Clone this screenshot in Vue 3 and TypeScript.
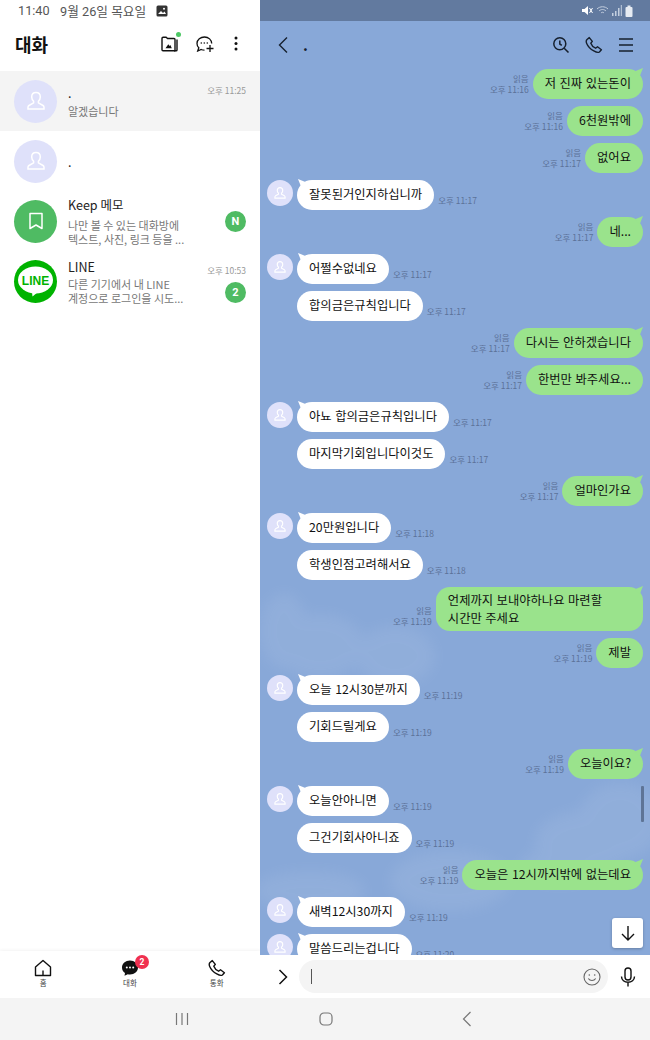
<script setup lang="ts">
interface Msg { t: string; me?: boolean; time: string; first?: boolean; multi?: boolean }
const msgs: Msg[] = [
  { t: '저 진짜 있는돈이', me: true, time: '오후 11:16', first: true },
  { t: '6천원밖에', me: true, time: '오후 11:16' },
  { t: '없어요', me: true, time: '오후 11:17' },
  { t: '잘못된거인지하십니까', time: '오후 11:17', first: true },
  { t: '네...', me: true, time: '오후 11:17', first: true },
  { t: '어쩔수없네요', time: '오후 11:17', first: true },
  { t: '합의금은규칙입니다', time: '오후 11:17' },
  { t: '다시는 안하겠습니다', me: true, time: '오후 11:17', first: true },
  { t: '한번만 봐주세요...', me: true, time: '오후 11:17' },
  { t: '아뇨 합의금은규칙입니다', time: '오후 11:17', first: true },
  { t: '마지막기회입니다이것도', time: '오후 11:17' },
  { t: '얼마인가요', me: true, time: '오후 11:17', first: true },
  { t: '20만원입니다', time: '오후 11:18', first: true },
  { t: '학생인점고려해서요', time: '오후 11:18' },
  { t: '언제까지 보내야하나요 마련할\n시간만 주세요', me: true, time: '오후 11:19', first: true, multi: true },
  { t: '제발', me: true, time: '오후 11:19' },
  { t: '오늘 12시30분까지', time: '오후 11:19', first: true },
  { t: '기회드릴게요', time: '오후 11:19' },
  { t: '오늘이요?', me: true, time: '오후 11:19', first: true },
  { t: '오늘안아니면', time: '오후 11:19', first: true },
  { t: '그건기회사아니죠', time: '오후 11:19' },
  { t: '오늘은 12시까지밖에 없는데요', me: true, time: '오후 11:19', first: true },
  { t: '새벽12시30까지', time: '오후 11:19', first: true },
  { t: '말씀드리는겁니다', time: '오후 11:20', first: true },
]
</script>

<template>
  <div class="screen">
    <div class="panes">
      <aside class="left">
        <div class="status">
          <span>11:40</span><span class="date">9월 26일 목요일</span>
          <svg class="st-img" width="12" height="12" viewBox="0 0 12 12"><rect x="0.5" y="0.5" width="11" height="11" rx="1.5" fill="#333"/><path d="M2 9l3-3 2 2 1.5-1.5L10 9z" fill="#fff"/><circle cx="8" cy="3.8" r="1" fill="#fff"/></svg>
        </div>
        <header class="lhead">
          <h1>대화</h1>
          <div class="lhead-icons">
            <span class="ic-wrap">
              <svg width="17" height="16" viewBox="0 0 17 16" fill="none" stroke="#111" stroke-width="1.400"><path d="M1 2.500c0-.8.500-1.300 1.200-1.300h3l1.300 1.300h6.500c.6 0 1 .4 1 1v11.300H2c-.6 0-1-.4-1-1z" stroke-linejoin="round"/><path d="M16 3.500v10.500c0 .5-.4.800-.9.800H13" /><path d="M4.500 12.300l2.800-4 1.300 1.700.8-.9 1.400 3.200z" fill="#111" stroke="none"/></svg>
              <i class="dot"></i>
            </span>
            <svg width="18" height="16" viewBox="0 0 18 16" fill="none" stroke="#111" stroke-width="1.300"><path d="M15.700 7.500C15.700 3.800 12.500 1 8.500 1S1 3.800 1 7.500c0 1.800.7 3.200 1.800 4.300L1.700 15l3.500-1.500c1 .4 2 .6 3.300.6"/><path d="M10.500 12.500h7M14 9v7"/><circle cx="5.300" cy="7" r=".8" fill="#111" stroke="none"/><circle cx="8.300" cy="7" r=".8" fill="#111" stroke="none"/><circle cx="11.300" cy="7" r=".8" fill="#111" stroke="none"/></svg>
            <svg class="kebab" width="4" height="15" viewBox="0 0 4 15" fill="#111"><circle cx="2" cy="2" r="1.500"/><circle cx="2" cy="7.500" r="1.500"/><circle cx="2" cy="13" r="1.500"/></svg>
          </div>
        </header>
        <ul class="rows">
          <li class="row active">
            <div class="ava">
              <svg width="22" height="22" viewBox="0 0 22 22" fill="none" stroke="#fff" stroke-width="1.500"><path d="M11 2.500c-2.800 0-4.300 2-4.300 4.500 0 1.800.8 3.200 1.900 4.300v1.500L4 15.500c-.8.500-1 1-1 1.800v1.700h16v-1.700c0-.8-.2-1.300-1-1.800l-4.600-2.700v-1.500c1.100-1.100 1.900-2.500 1.900-4.300 0-2.500-1.500-4.500-4.300-4.500z"/></svg>
            </div>
            <div class="rbody"><div class="rname">.</div><div class="rtext">알겠습니다</div></div>
            <div class="rside"><span class="rtime">오후 11:25</span></div>
          </li>
          <li class="row">
            <div class="ava">
              <svg width="22" height="22" viewBox="0 0 22 22" fill="none" stroke="#fff" stroke-width="1.500"><path d="M11 2.500c-2.800 0-4.300 2-4.300 4.500 0 1.800.8 3.200 1.900 4.300v1.500L4 15.500c-.8.500-1 1-1 1.800v1.700h16v-1.700c0-.8-.2-1.300-1-1.800l-4.600-2.700v-1.500c1.100-1.100 1.900-2.500 1.900-4.300 0-2.500-1.500-4.500-4.300-4.500z"/></svg>
            </div>
            <div class="rbody"><div class="rname">.</div></div>
          </li>
          <li class="row keep-row">
            <div class="ava keep">
              <svg width="16" height="18" viewBox="0 0 16 18" fill="none" stroke="#fff" stroke-width="1.500"><path d="M2 1.500h12v15l-6-3.500-6 3.500z" stroke-linejoin="round"/></svg>
            </div>
            <div class="rbody"><div class="rname">Keep 메모</div><div class="rtext">나만 볼 수 있는 대화방에<br>텍스트, 사진, 링크 등을 ...</div></div>
            <div class="rside center"><span class="badge">N</span></div>
          </li>
          <li class="row line-row">
            <div class="ava line">
              <svg width="43" height="43" viewBox="0 0 43 43"><ellipse cx="21.500" cy="20" rx="17.500" ry="13.500" fill="#fff"/><path d="M18 32l6 0-5.500 4.500z" fill="#fff"/><text x="21.500" y="24.500" text-anchor="middle" class="line-text">LINE</text></svg>
            </div>
            <div class="rbody"><div class="rname">LINE</div><div class="rtext">다른 기기에서 내 LINE<br>계정으로 로그인을 시도...</div></div>
            <div class="rside"><span class="rtime">오후 10:53</span><span class="badge mt">2</span></div>
          </li>
        </ul>
        <nav class="tabs">
          <div class="tab">
            <svg width="18" height="18" viewBox="0 0 18 18" fill="none" stroke="#111" stroke-width="1.400"><path d="M1.500 8L9 1.500 16.500 8v8.500h-15zM9 11.500v5" stroke-linejoin="round"/></svg>
            <span>홈</span>
          </div>
          <div class="tab">
            <span class="tab-ic">
              <svg width="18" height="18" viewBox="0 0 18 18"><path d="M9 1.500c-4.500 0-8 3-8 7 0 2.400 1.200 4.300 3 5.500l-.5 2.800 3.300-1.500c.7.100 1.400.2 2.200.2 4.400 0 8-3 8-7s-3.600-7-8-7z" fill="#111"/><circle cx="5.800" cy="8.500" r="1" fill="#fff"/><circle cx="9" cy="8.500" r="1" fill="#fff"/><circle cx="12.200" cy="8.500" r="1" fill="#fff"/></svg>
              <b class="tab-badge">2</b>
            </span>
            <span>대화</span>
          </div>
          <div class="tab">
            <svg width="18" height="18" viewBox="0 0 18 18" fill="none" stroke="#111" stroke-width="1.400"><path d="M2 3.500L4.300 1.600l3 3.800-1.500 1.900c.8 2.200 2.600 4 4.800 4.900l1.900-1.500 3.900 3-2 2.300c-1.200.8-3.200.3-5.600-1.100C5.500 13.100 3 10.500 1.700 7.400 1 5.800 1 4.500 2 3.500z" stroke-linejoin="round"/></svg>
            <span>통화</span>
          </div>
        </nav>
      </aside>

      <main class="right">
        <div class="rstatus">
          <svg width="11" height="11" viewBox="0 0 11 11" fill="#fff"><path d="M0 4h2.500L6 1v9L2.500 7H0z"/><path d="M7.500 3l3 5M10.500 3l-3 5" stroke="#fff" stroke-width="1"/></svg>
          <svg width="13" height="11" viewBox="0 0 13 11" fill="none" stroke="#c4cfdf" stroke-width="1"><path d="M1 4c3-3 8-3 11 0M3 6c2-2 5-2 7 0M5 8c1-1 2-1 3 0"/></svg>
          <svg width="10" height="11" viewBox="0 0 10 11" fill="#c4cfdf"><rect x="0" y="8" width="1.500" height="3"/><rect x="3" y="6" width="1.500" height="5"/><rect x="6" y="3" width="1.500" height="8"/><rect x="8.800" y="0" width="1" height="11"/></svg>
          <svg width="8" height="12" viewBox="0 0 8 12" fill="#e6ebf2"><rect x="0.500" y="2" width="7" height="10" rx="1"/><rect x="2.500" y="0.500" width="3" height="2"/></svg>
        </div>
        <div class="chat">
          <svg class="clouds" width="390" height="934" viewBox="0 0 390 934">
            <defs><filter id="blur" x="-30%" y="-30%" width="160%" height="160%"><feGaussianBlur stdDeviation="7"/></filter></defs>
            <g fill="#fff" opacity=".07" filter="url(#blur)">
              <ellipse cx="24" cy="610" rx="24" ry="38"/>
              <ellipse cx="60" cy="625" rx="45" ry="32"/>
              <ellipse cx="135" cy="635" rx="40" ry="30"/>
              <ellipse cx="325" cy="820" rx="50" ry="30"/>
              <ellipse cx="360" cy="800" rx="42" ry="38"/>
              <ellipse cx="300" cy="845" rx="40" ry="18"/>
              <ellipse cx="50" cy="870" rx="55" ry="20"/>
              <ellipse cx="190" cy="860" rx="60" ry="30"/>
            </g>
          </svg>
          <header class="chead">
            <div class="chead-l">
              <svg width="12" height="18" viewBox="0 0 12 18" fill="none" stroke="#16202e" stroke-width="1.400"><path d="M10 1.500L2.500 9l7.500 7.500"/></svg>
              <span class="cname">.</span>
            </div>
            <div class="chead-r">
              <svg width="18" height="18" viewBox="0 0 18 18" fill="none" stroke="#16202e" stroke-width="1.500"><circle cx="7.800" cy="7.800" r="6"/><path d="M12.200 12.200l4.300 4.300M7.800 4.500v3.500l2 1.300"/></svg>
              <svg width="18" height="18" viewBox="0 0 18 18" fill="none" stroke="#16202e" stroke-width="1.400"><path d="M2 3.500L4.300 1.600l3 3.800-1.500 1.900c.8 2.200 2.600 4 4.800 4.900l1.900-1.500 3.900 3-2 2.300c-1.200.8-3.200.3-5.600-1.100C5.500 13.100 3 10.500 1.700 7.400 1 5.800 1 4.500 2 3.500z" stroke-linejoin="round"/></svg>
              <svg width="16" height="16" viewBox="0 0 16 16" stroke="#16202e" stroke-width="1.500"><path d="M1 2h14M1 8h14M1 14h14"/></svg>
            </div>
          </header>
          <div class="msgs">
            <div v-for="(m, i) in msgs" :key="i" class="msg" :class="m.me ? 'me' : 'them'">
              <template v-if="m.me">
                <div class="meta"><span>읽음</span><span>{{ m.time }}</span></div>
                <div class="bubble" :class="{ tail: m.first, multi: m.multi }">{{ m.t }}</div>
              </template>
              <template v-else>
                <div class="mava" :class="{ blank: !m.first }">
                  <svg v-if="m.first" width="14" height="14" viewBox="0 0 22 22" fill="none" stroke="#fff" stroke-width="1.800"><path d="M11 2.500c-2.800 0-4.300 2-4.300 4.500 0 1.800.8 3.200 1.900 4.300v1.500L4 15.500c-.8.500-1 1-1 1.800v1.700h16v-1.700c0-.8-.2-1.300-1-1.800l-4.600-2.700v-1.500c1.100-1.100 1.900-2.500 1.900-4.300 0-2.500-1.500-4.500-4.300-4.500z"/></svg>
                </div>
                <div class="bubble" :class="{ tail: m.first }">{{ m.t }}</div>
                <div class="time">{{ m.time }}</div>
              </template>
            </div>
          </div>
          <i class="scroll"></i>
          <button class="down">
            <svg width="16" height="16" viewBox="0 0 16 16" fill="none" stroke="#111" stroke-width="1.400"><path d="M8 1v14M2 9l6 6 6-6"/></svg>
          </button>
        </div>
        <div class="input">
          <svg width="10" height="16" viewBox="0 0 10 16" fill="none" stroke="#111" stroke-width="1.500"><path d="M1.500 1l7 7-7 7"/></svg>
          <div class="field">
            <i class="caret"></i>
            <svg width="18" height="18" viewBox="0 0 18 18" fill="none" stroke="#666" stroke-width="1.100"><circle cx="9" cy="9" r="8"/><path d="M5.300 10.500c1.800 2.600 5.600 2.600 7.400 0"/><circle cx="6.300" cy="7" r=".8" fill="#666" stroke="none"/><circle cx="11.700" cy="7" r=".8" fill="#666" stroke="none"/></svg>
          </div>
          <svg width="16" height="20" viewBox="0 0 16 20" fill="none" stroke="#111" stroke-width="1.400"><rect x="5" y="1" width="6" height="12" rx="3"/><path d="M1.500 9.500c0 3.500 3 5.800 6.500 5.800s6.500-2.300 6.500-5.800M8 15.300V19.500"/></svg>
        </div>
      </main>
    </div>
    <footer class="sys">
      <svg width="14" height="14" viewBox="0 0 14 14" stroke="#777" stroke-width="1.200"><path d="M1.500 1v12M7 1v12M12.500 1v12"/></svg>
      <svg width="14" height="14" viewBox="0 0 14 14" fill="none" stroke="#777" stroke-width="1.200"><rect x="1" y="1" width="12" height="12" rx="4"/></svg>
      <svg width="10" height="16" viewBox="0 0 10 16" fill="none" stroke="#777" stroke-width="1.200"><path d="M8.500 1L1.500 8l7 7"/></svg>
    </footer>
  </div>
</template>

<style>
html, body { margin: 0; background: #fff; }
</style>

<style scoped>
* { box-sizing: border-box; }
.screen { width: 650px; height: 1040px; display: flex; flex-direction: column; overflow: hidden; font-family: "Noto Sans CJK KR", "Noto Sans", sans-serif; color: #111; }
.panes { flex: 1; display: flex; min-height: 0; }
.left { width: 260px; display: flex; flex-direction: column; background: #fff; }
.status { height: 21px; padding-left: 18px; display: flex; align-items: center; font-size: 12.700px; color: #555; font-family: Roboto, "Noto Sans CJK KR", sans-serif; }
.date { margin-left: 10.500px; }
.st-img { margin-left: 10px; }
.lhead { height: 50px; display: flex; align-items: center; justify-content: space-between; padding: 0 22px 5px 15px; }
.lhead h1 { margin: 0; font-size: 18px; font-weight: 700; color: #111; }
.lhead-icons { display: flex; align-items: center; gap: 18px; }
.kebab { margin-left: 2px; }
.ic-wrap { position: relative; display: flex; }
.dot { position: absolute; right: -3px; top: -4px; width: 5px; height: 5px; background: #4cc764; border-radius: 50%; }
.rows { list-style: none; margin: 0; padding: 0; flex: 1; }
.row { height: 60px; display: flex; align-items: center; padding: 0 14px; }
.row.active { background: #f4f4f4; }
.ava { width: 43px; height: 43px; flex: none; border-radius: 50%; background: #dfe1fa; display: flex; align-items: center; justify-content: center; }
.ava.keep { background: #4fbb63; }
.ava.line { background: #00b300; }
.line-text { font-family: "Liberation Sans", sans-serif; font-size: 12px; font-weight: 700; fill: #00b300; }
.rbody { flex: 1; margin-left: 11px; min-width: 0; }
.rname { font-size: 12.500px; line-height: 17px; color: #222; }
.rtext { font-size: 11px; line-height: 14.500px; color: #777; margin-top: 3px; }
.keep-row .rtext { margin-top: 5px; }
.line-row .rbody { padding-top: 1px; }
.line-row .rtext { margin-top: 2px; }
.rside { width: 42px; align-self: stretch; display: flex; flex-direction: column; align-items: flex-end; padding-top: 13px; }
.rside.center { justify-content: center; padding-top: 0; }
.rtime { font-size: 8.500px; color: #999; line-height: 12px; white-space: nowrap; }
.badge { width: 21px; height: 21px; border-radius: 50%; background: #4fbb63; color: #fff; font-size: 11px; font-weight: 700; display: flex; align-items: center; justify-content: center; font-family: Roboto, sans-serif; }
.badge.mt { margin-top: 6px; }
.tabs { height: 47px; display: flex; justify-content: space-between; box-shadow: 0 -1px 3px rgba(0,0,0,.05); }
.tab { width: 86.600px; display: flex; flex-direction: column; align-items: center; padding-top: 8px; font-size: 7.500px; color: #444; line-height: 11px; }
.tab-ic { position: relative; display: flex; }
.tab-badge { position: absolute; left: 14px; top: -4px; width: 14px; height: 14px; border-radius: 50%; background: #f0304f; color: #fff; font-size: 8.500px; font-family: Roboto, sans-serif; display: flex; align-items: center; justify-content: center; }
.right { flex: 1; display: flex; flex-direction: column; min-width: 0; background: #fff; }
.rstatus { height: 21px; background: #627a9f; display: flex; align-items: center; justify-content: flex-end; gap: 3px; padding-right: 17px; }
.chat { position: relative; flex: 1; min-height: 0; background: #88a8d8; overflow: hidden; display: flex; flex-direction: column; }
.clouds { position: absolute; left: 0; top: 0; }
.chead { position: relative; height: 48px; flex: none; display: flex; align-items: center; justify-content: space-between; padding: 0 16px 0 17px; }
.chead-l { display: flex; align-items: center; gap: 14px; }
.cname { font-size: 15px; line-height: 18px; color: #16202e; font-weight: 700; }
.chead-r { display: flex; align-items: center; gap: 15px; }
.msgs { position: relative; display: flex; flex-direction: column; gap: 7px; padding: 0 7px; }
.msg { display: flex; align-items: flex-end; flex: none; }
.me { justify-content: flex-end; gap: 4px; }
.meta { display: flex; flex-direction: column; align-items: flex-end; font-size: 8.500px; line-height: 11px; color: #5c7298; padding-bottom: 4px; }
.time { font-size: 8.500px; line-height: 11px; color: #5c7298; margin-left: 4px; padding-bottom: 4px; }
.mava { width: 26px; height: 26px; border-radius: 50%; background: #dfe1fa; margin-right: 4px; align-self: flex-start; flex: none; display: flex; align-items: center; justify-content: center; }
.mava.blank { background: transparent; }
.bubble { position: relative; height: 30px; padding: 0 12px; border-radius: 15px; background: #fff; font-size: 12.300px; word-spacing: 0.800px; line-height: 28px; color: #111; white-space: pre; }
.me .bubble { background: #9ae38c; }
.bubble.multi { height: 44px; line-height: 18px; padding: 4px 41px 4px 12px; border-radius: 14px; }
.them .tail::before { content: ""; position: absolute; left: 1px; top: -1px; width: 8px; height: 8px; background: #fff; clip-path: polygon(0 0, 100% 40%, 40% 100%); }
.me .tail::before { content: ""; position: absolute; right: 0; top: -1px; width: 8px; height: 8px; background: #9ae38c; clip-path: polygon(100% 0, 60% 100%, 0 40%); }
.scroll { position: absolute; right: 6px; top: 765px; width: 3px; height: 36px; background: #5e7496; border-radius: 1px; }
.down { position: absolute; right: 7px; bottom: 7px; width: 31px; height: 30px; background: #fff; border: 0; border-radius: 3px; box-shadow: 0 1px 3px rgba(0,0,0,.25); display: flex; align-items: center; justify-content: center; padding: 0; }
.input { height: 43px; flex: none; display: flex; align-items: center; padding: 0 14px 0 18px; background: #fff; }
.field { width: 309px; height: 33px; margin: 0 12px 0 11px; background: #f4f4f4; border-radius: 17px; display: flex; align-items: center; justify-content: space-between; padding: 0 7px 0 12px; }
.caret { width: 1px; height: 15px; background: #555; }
.sys { height: 42px; flex: none; background: #f4f4f4; display: flex; align-items: center; justify-content: space-between; padding: 0 178px 0 175px; }
</style>
